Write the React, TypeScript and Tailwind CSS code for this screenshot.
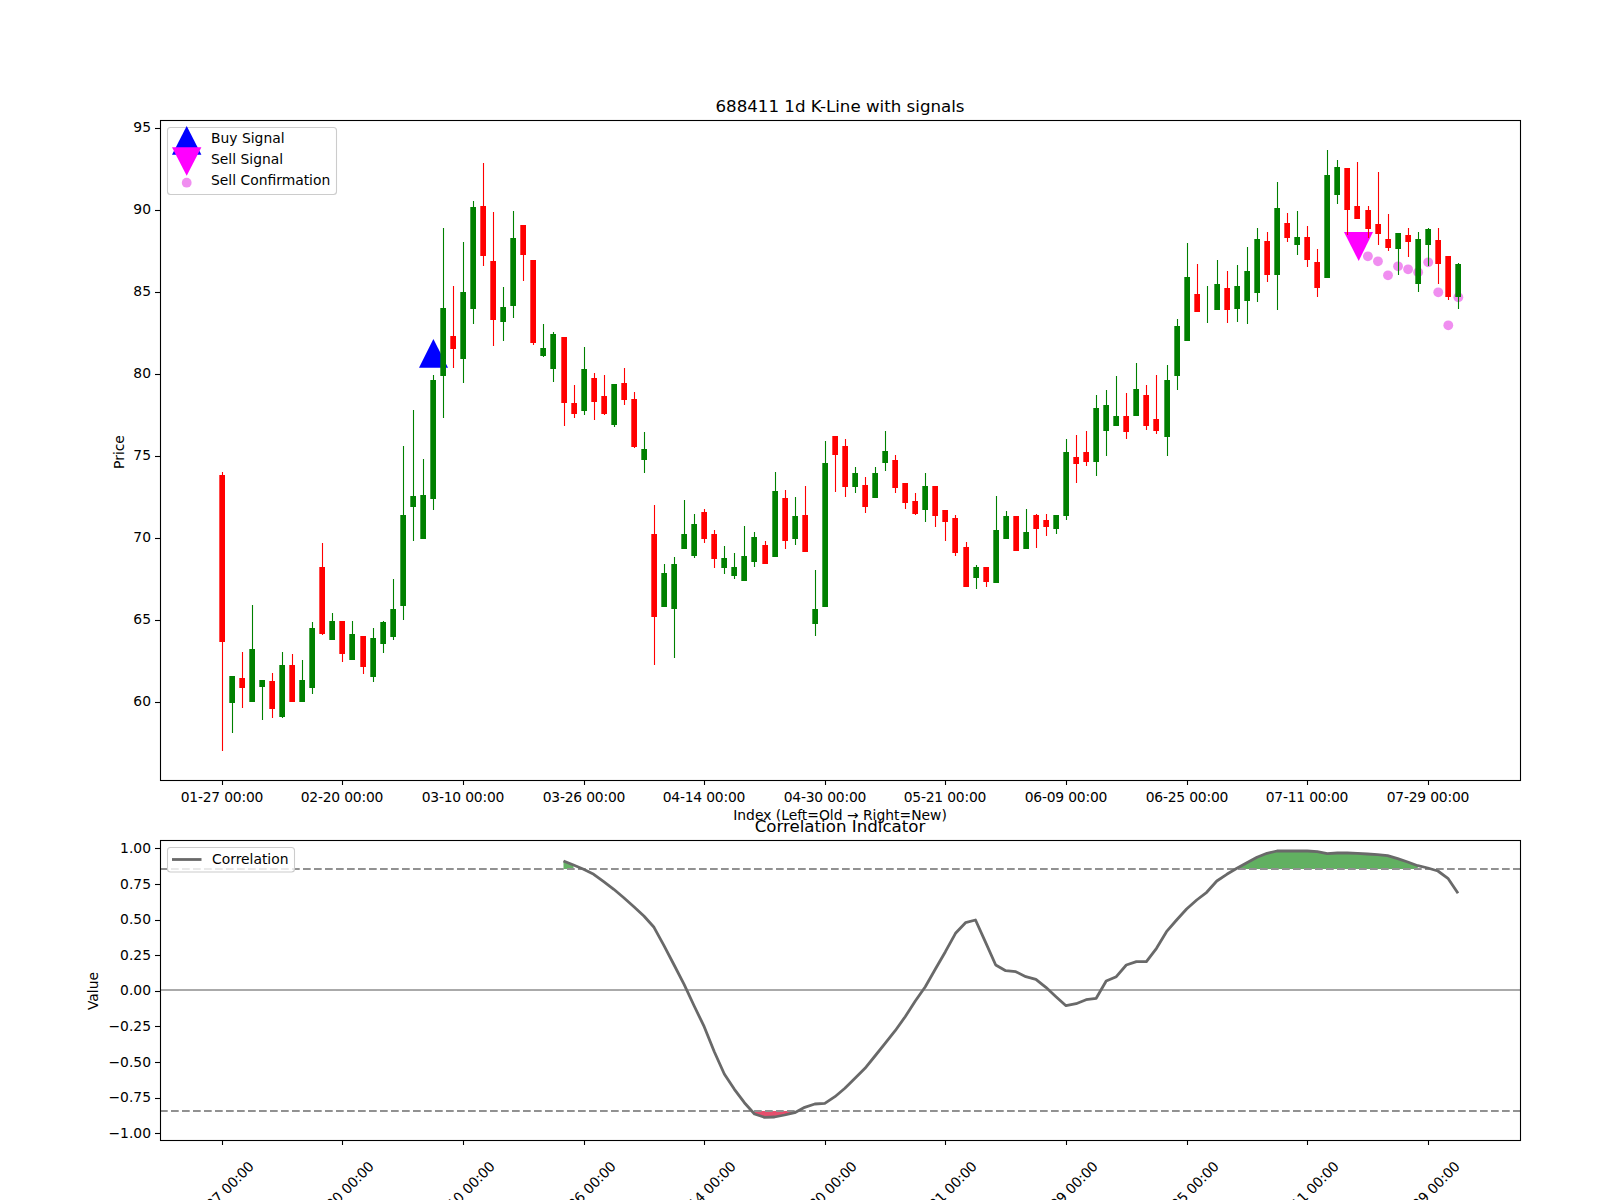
const xAt = (i: number) => 221.8 + 10.05 * i;

// [green?, high, body top, body bottom, low] in figure pixels
const candles: number[][] = [
  [0, 472, 475, 642, 751], [1, 676, 676, 703, 733], [0, 652, 678, 688, 708], [1, 605, 649, 702, 702],
  [1, 680, 680, 687, 720], [0, 673, 681, 709, 718], [1, 652, 665, 717, 718], [0, 654, 665, 702, 702],
  [1, 660, 680, 702, 702], [1, 622, 628, 688, 694], [0, 543, 567, 634, 635], [1, 613, 621, 640, 640],
  [0, 621, 621, 654, 662], [1, 621, 634, 660, 660], [0, 636, 636, 667, 674], [1, 628, 638, 677, 682],
  [1, 621, 622, 644, 653], [1, 579, 609, 637, 640], [1, 446, 515, 606, 620], [1, 410, 496, 507, 541],
  [1, 459, 495, 539, 539], [1, 375, 380, 499, 510], [1, 228, 308, 376, 418], [0, 286, 336, 349, 368],
  [1, 242, 292, 359, 383], [1, 201, 207, 309, 324], [0, 163, 206, 256, 266], [0, 212, 261, 320, 346],
  [1, 287, 307, 322, 341], [1, 211, 238, 306, 318], [0, 225, 225, 255, 281], [0, 260, 260, 343, 345],
  [1, 324, 348, 356, 357], [1, 332, 334, 369, 382], [0, 337, 337, 403, 426], [0, 385, 403, 414, 418],
  [1, 347, 369, 411, 415], [0, 373, 378, 402, 420], [0, 375, 396, 414, 415], [1, 384, 384, 425, 427],
  [0, 368, 383, 400, 405], [0, 392, 399, 447, 448], [1, 432, 449, 460, 473], [0, 505, 534, 617, 665],
  [1, 564, 573, 607, 607], [1, 557, 564, 609, 658], [1, 500, 534, 549, 549], [1, 514, 524, 556, 558],
  [0, 509, 512, 539, 543], [0, 530, 534, 559, 568], [1, 546, 558, 568, 574], [1, 553, 567, 576, 579],
  [1, 526, 556, 581, 581], [1, 532, 537, 562, 567], [0, 541, 545, 564, 564], [1, 472, 491, 557, 557],
  [0, 490, 498, 541, 549], [1, 497, 516, 539, 545], [0, 486, 515, 552, 552], [1, 570, 609, 624, 636],
  [1, 441, 463, 607, 607], [0, 436, 436, 455, 492], [0, 439, 446, 487, 497], [1, 467, 473, 487, 493],
  [0, 477, 485, 507, 513], [1, 467, 473, 498, 498], [1, 431, 451, 463, 471], [0, 455, 460, 488, 493],
  [0, 483, 483, 503, 509], [0, 493, 501, 514, 515], [1, 473, 486, 510, 522], [0, 486, 486, 516, 527],
  [0, 510, 510, 522, 541], [0, 515, 518, 553, 556], [0, 542, 547, 587, 587], [1, 565, 567, 578, 589],
  [0, 567, 567, 582, 587], [1, 496, 530, 583, 583], [1, 511, 516, 539, 539], [0, 516, 516, 551, 551],
  [1, 509, 532, 549, 549], [0, 514, 515, 529, 548], [0, 514, 520, 527, 536], [1, 515, 515, 529, 534],
  [1, 439, 452, 516, 520], [0, 435, 457, 464, 483], [0, 431, 452, 462, 466], [1, 395, 408, 462, 476],
  [1, 390, 405, 431, 456], [1, 376, 416, 426, 426], [0, 393, 416, 432, 439], [1, 363, 389, 416, 416],
  [0, 385, 395, 426, 430], [0, 375, 419, 431, 434], [1, 365, 380, 437, 456], [1, 319, 326, 376, 390],
  [1, 243, 277, 341, 341], [0, 264, 294, 312, 312], [1, 286, 305, 305, 323], [1, 260, 284, 310, 310],
  [0, 271, 288, 310, 323], [1, 265, 286, 309, 322], [1, 247, 271, 301, 324], [1, 228, 239, 293, 302],
  [0, 232, 241, 275, 282], [1, 182, 208, 275, 310], [0, 213, 223, 238, 242], [1, 211, 237, 245, 255],
  [0, 226, 237, 260, 267], [0, 249, 262, 288, 297], [1, 150, 175, 278, 278], [1, 160, 167, 195, 204],
  [0, 168, 168, 210, 235], [0, 162, 206, 219, 219], [0, 206, 210, 229, 238], [0, 172, 224, 234, 245],
  [0, 214, 239, 248, 251], [1, 233, 233, 249, 275], [0, 228, 235, 242, 257], [1, 232, 239, 284, 292],
  [1, 228, 229, 245, 266], [0, 228, 240, 264, 284], [0, 256, 256, 297, 300], [1, 263, 264, 297, 309],
];

const confirmations = [256.3, 261.3, 275.3, 266.3, 269.3, 272.3, 262.3, 292.3, 325.3, 297.3];

// correlation line, starts at bar 34
const corr = [
  861, 865, 869.3, 874.3, 881.7, 889.3, 897.7, 906.7, 916, 927.3, 945.7, 965, 984.3, 1006, 1026.7, 1051.7,
  1074, 1089.3, 1102.7, 1114, 1117.3, 1117, 1115, 1112.7, 1107.3, 1104, 1103.3, 1096.7, 1088.3, 1078.3,
  1068.3, 1056, 1043.3, 1030.7, 1016.7, 1001, 986.7, 969, 951.7, 933.3, 922.7, 920, 942.3, 965, 970.7,
  971.7, 976.7, 979.3, 987.3, 996.7, 1005.7, 1003.7, 999.7, 998.3, 981, 976.7, 965, 961.7, 961.7, 948.3,
  931.7, 920, 909, 900, 892.3, 881, 874.3, 868.3, 862.7, 857.3, 853.3, 851, 851, 851, 851, 851.7, 853.7,
  853, 853, 853.3, 854, 854.7, 855.7, 858.7, 862, 865.7, 868, 871, 878.3, 893.3,
];

const corrPoints = (from: number, to: number) => {
  const pts: string[] = [];
  for (let i = from; i <= to; i++) pts.push(`${xAt(i).toFixed(1)},${corr[i - 34]}`);
  return pts;
};

const band = (from: number, to: number, y: number) =>
  [...corrPoints(from, to), `${xAt(to).toFixed(1)},${y}`, `${xAt(from).toFixed(1)},${y}`].join(" ");

const dates = ["01-27", "02-20", "03-10", "03-26", "04-14", "04-30", "05-21", "06-09", "06-25", "07-11", "07-29"];
const priceTicks = [95, 90, 85, 80, 75, 70, 65, 60];
const valueTicks = ["1.00", "0.75", "0.50", "0.25", "0.00", "−0.25", "−0.50", "−0.75", "−1.00"];

const tickText = "fill-black text-[13.89px]";
const dateText = "fill-black text-[13.89px] tracking-[-0.2px]";

const crisp = (v: number) => Math.round(v) + 0.5;

const KlinePanel = () => (
  <svg viewBox="0 118 1600 702" className="block h-[702px] w-[1600px] overflow-visible">
    {confirmations.map((y, k) => (
      <circle key={k} cx={xAt(114 + k) + 0.4} cy={y} r={4.9} fill="#ee82ee" fillOpacity={0.9} />
    ))}
    <polygon points="419,367.7 448,367.7 433.4,339" fill="#0000ff" />
    <polygon points="1344,232 1373,232 1358.7,261" fill="#ff00ff" />

    {candles.map(([green, hi, top, bot, lo], i) => {
      const x = crisp(xAt(i));
      const color = green ? "#008000" : "#ff0000";
      return (
        <g key={i}>
          <line x1={x} x2={x} y1={hi} y2={lo} stroke={color} strokeWidth={1.1} />
          {bot > top && <rect x={x - 3.2} y={top} width={5.7} height={bot - top} fill={color} />}
        </g>
      );
    })}

    <rect x={160.5} y={120.5} width={1360} height={660} fill="none" stroke="#000" strokeWidth={1.1} />

    {priceTicks.map((v, k) => {
      const y = 127.7 + 82 * k;
      return (
        <g key={v}>
          <line x1={155} x2={160} y1={crisp(y)} y2={crisp(y)} stroke="#000" strokeWidth={1.1} />
          <text x={151} y={y - 0.3} textAnchor="end" dominantBaseline="central" className={tickText}>
            {v}
          </text>
        </g>
      );
    })}
    {dates.map((d, k) => {
      const x = crisp(xAt(k * 12));
      return (
        <g key={d}>
          <line x1={x} x2={x} y1={780} y2={785} stroke="#000" strokeWidth={1.1} />
          <text x={x - 0.6} y={796.5} textAnchor="middle" dominantBaseline="central" className={dateText}>
            {d} 00:00
          </text>
        </g>
      );
    })}
    <text x={840} y={815} textAnchor="middle" dominantBaseline="central" className={tickText}>
      Index (Left=Old → Right=New)
    </text>
    <text
      x={119}
      y={452}
      textAnchor="middle"
      dominantBaseline="central"
      transform="rotate(-90 119 452)"
      className={tickText}
    >
      Price
    </text>

    {/* legend */}
    <rect x={167.5} y={127.5} width={169} height={67} rx={3} fill="#fff" fillOpacity={0.8} stroke="#ccc" strokeWidth={1.1} />
    <polygon points="172,154.7 201.4,154.7 186.7,126" fill="#0000ff" />
    <polygon points="172,147.3 201.4,147.3 186.7,175.7" fill="#ff00ff" />
    <circle cx={186.7} cy={182.7} r={4.9} fill="#ee82ee" fillOpacity={0.9} />
    <text x={211} y={138.3} dominantBaseline="central" className={tickText}>Buy Signal</text>
    <text x={211} y={159.3} dominantBaseline="central" className={tickText}>Sell Signal</text>
    <text x={211} y={180.3} dominantBaseline="central" className={tickText}>Sell Confirmation</text>
  </svg>
);

const IndicatorPanel = () => (
  <svg viewBox="0 832 1600 368" className="block h-[368px] w-[1600px] overflow-visible">
    <polygon points={band(34, 35, 869)} fill="#008000" fillOpacity={0.6} />
    <polygon points={band(101, 119, 869)} fill="#008000" fillOpacity={0.62} />
    <polygon points={band(53, 57, 1111)} fill="#dc143c" fillOpacity={0.75} />

    <line x1={160} x2={1520} y1={990} y2={990} stroke="#aaaaaa" strokeWidth={2.2} />
    <line x1={160} x2={1520} y1={869} y2={869} stroke="#919191" strokeWidth={2} strokeDasharray="7.7 3.3" />
    <line x1={160} x2={1520} y1={1111} y2={1111} stroke="#919191" strokeWidth={2} strokeDasharray="7.7 3.3" />
    <polyline points={corrPoints(34, 123).join(" ")} fill="none" stroke="#696969" strokeWidth={2.8} strokeLinejoin="round" />

    <rect x={160.5} y={840.5} width={1360} height={300} fill="none" stroke="#000" strokeWidth={1.1} />

    {valueTicks.map((v, k) => {
      const y = 848.3 + 35.62 * k;
      return (
        <g key={v}>
          <line x1={155} x2={160} y1={crisp(y)} y2={crisp(y)} stroke="#000" strokeWidth={1.1} />
          <text x={151} y={y - 0.3} textAnchor="end" dominantBaseline="central" className={tickText}>
            {v}
          </text>
        </g>
      );
    })}
    {dates.map((d, k) => {
      const x = crisp(xAt(k * 12));
      return (
        <g key={d}>
          <line x1={x} x2={x} y1={1140} y2={1145} stroke="#000" strokeWidth={1.1} />
          <text
            x={x - 0.5}
            y={1193}
            textAnchor="middle"
            dominantBaseline="central"
            transform={`rotate(-45 ${x - 0.5} 1193)`}
            className={dateText}
          >
            {d} 00:00
          </text>
        </g>
      );
    })}
    <text
      x={93}
      y={991}
      textAnchor="middle"
      dominantBaseline="central"
      transform="rotate(-90 93 991)"
      className={tickText}
    >
      Value
    </text>

    {/* legend */}
    <rect x={167.5} y={847.5} width={127} height={24.5} rx={3} fill="#fff" fillOpacity={0.8} stroke="#ccc" strokeWidth={1.1} />
    <line x1={172} x2={201.5} y1={859.5} y2={859.5} stroke="#696969" strokeWidth={2.8} />
    <text x={212} y={859.3} dominantBaseline="central" className={tickText}>Correlation</text>
  </svg>
);

export default function App() {
  return (
    <div className="h-[1200px] w-[1600px] overflow-hidden bg-white font-['DejaVu_Sans',sans-serif] text-black">
      <div className="pt-[95px]">
        <h2 className="h-[23px] text-center text-[16.67px] font-normal leading-[24px] pl-[80px]">
          688411 1d K-Line with signals
        </h2>
        <KlinePanel />
        <h2 className="relative z-10 h-[12px] text-center text-[16.67px] font-normal leading-[14px] pl-[80px]">
          Correlation Indicator
        </h2>
        <IndicatorPanel />
      </div>
    </div>
  );
}
